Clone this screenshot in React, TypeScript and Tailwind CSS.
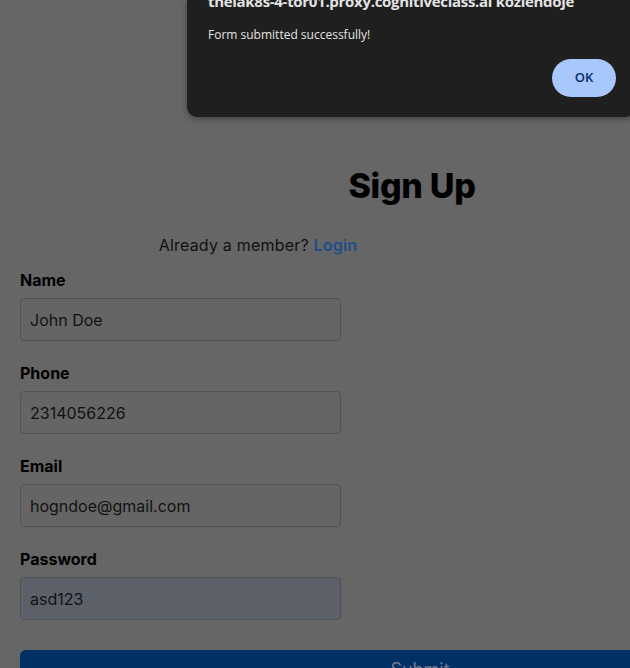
import React from 'react';

const fields = [
  { label: 'Name', value: 'John Doe', autofill: false },
  { label: 'Phone', value: '2314056226', autofill: false },
  { label: 'Email', value: 'hogndoe@gmail.com', autofill: false },
  { label: 'Password', value: 'asd123', autofill: true },
];

const App: React.FC = () => {
  return (
    <div className="relative w-[630px] h-[668px] overflow-hidden bg-[#666666]" style={{ fontFamily: 'Inter, "Noto Sans", sans-serif' }}>
      {/* Sign up form (dimmed behind the alert) */}
      <div className="w-[824px] px-5 pt-[166px]">
        <h1 className="text-center text-[34px] leading-[40px] font-extrabold text-black tracking-[-0.3px]">Sign Up</h1>
        <p className="mt-[27px] w-[476px] text-center text-[16px] leading-6 text-[#111] tracking-[0.2px]">
          Already a member? <span className="font-semibold text-[#1d4e89]">Login</span>
        </p>

        <form className="mt-[11px] flex flex-col gap-5" onSubmit={(e) => e.preventDefault()}>
          {fields.map((f) => (
            <div key={f.label} className="flex flex-col">
              <label className="text-[16px] leading-6 font-bold text-black">{f.label}</label>
              <div
                className={`mt-[6px] w-[321px] h-[43px] flex items-center px-[9px] rounded border border-[#525252] text-[16px] text-[#111] ${
                  f.autofill ? 'bg-[#5c6069]' : 'bg-[#656565]'
                }`}
              >
                {f.value}
              </div>
            </div>
          ))}

          <button
            type="submit"
            className="mt-[10px] w-[800px] h-[40px] rounded-md bg-[#003066] text-[18px] leading-6 text-[#737b8a]"
          >
            Submit
          </button>
        </form>
      </div>

      {/* Browser alert */}
      <div
        className="absolute left-[187px] top-0 w-[448px] h-[117px] bg-[#1f1f1f] rounded-b-[10px] shadow-[0_2px_6px_rgba(0,0,0,0.35)]"
        style={{ fontFamily: '"Open Sans", "Noto Sans", sans-serif' }}
      >
        <div className="px-[21px]">
          <div className="-mt-[9px] text-[15px] leading-5 font-bold text-[#e3e3e3] whitespace-nowrap tracking-[-0.3px]">
            theiak8s-4-tor01.proxy.cognitiveclass.ai kozlendoje
          </div>
          <div className="mt-[16px] text-[12px] leading-4 text-[#e3e3e3]">Form submitted successfully!</div>
        </div>
        <div className="flex justify-end pr-[19px] mt-[16px]">
          <button className="w-[64px] h-[38px] rounded-full bg-[#a8c7fa] text-[13px] font-semibold text-[#062e6f]">
            OK
          </button>
        </div>
      </div>
    </div>
  );
};

export default App;
